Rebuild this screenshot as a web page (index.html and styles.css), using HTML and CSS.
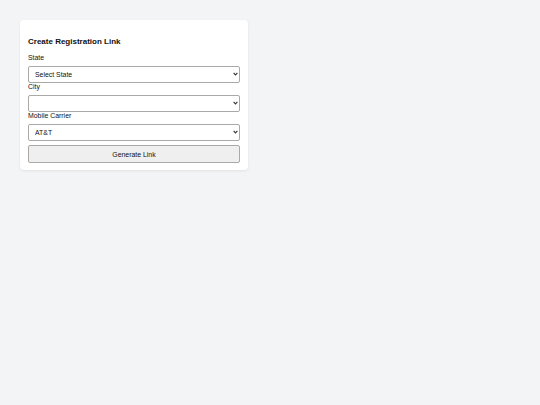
FILE: index.html
```html
<!DOCTYPE html>
<html lang="en">

<head>
  <meta charset="UTF-8">
  <title>Create Registration Link</title>
  <link rel="stylesheet" href="styles.css">
</head>

<body>
  <div class="card">
    <h3 class="card-title">Create Registration Link</h3>

    <label for="state">State</label>
    <div class="select-wrap">
      <select id="state">
        <option>Select State</option>
      </select>
      <svg class="chevron" width="5" height="4" viewBox="0 0 5 4"><path d="M0.6 0.8 L2.5 2.9 L4.4 0.8" fill="none" stroke="#333" stroke-width="1.1"/></svg>
    </div>

    <label for="city">City</label>
    <div class="select-wrap">
      <select id="city">
        <option></option>
      </select>
      <svg class="chevron" width="5" height="4" viewBox="0 0 5 4"><path d="M0.6 0.8 L2.5 2.9 L4.4 0.8" fill="none" stroke="#333" stroke-width="1.1"/></svg>
    </div>

    <label for="carrier">Mobile Carrier</label>
    <div class="select-wrap">
      <select id="carrier">
        <option>AT&amp;T</option>
        <option>Verizon</option>
        <option>T-Mobile</option>
      </select>
      <svg class="chevron" width="5" height="4" viewBox="0 0 5 4"><path d="M0.6 0.8 L2.5 2.9 L4.4 0.8" fill="none" stroke="#333" stroke-width="1.1"/></svg>
    </div>

    <button id="generate">Generate Link</button>
  </div>
</body>

</html>
```

FILE: styles.css
```css
:root {
  --bg-color: #f3f4f6;
  --border-color: #a9a9a9;
  --text-color: #111;
}

body {
  font-family: "Liberation Sans", Arial, sans-serif;
  font-size: 6.9px;
  margin: 0;
  padding: 20px;
  color: var(--text-color);
  background-color: var(--bg-color);
}

.card {
  width: 212px;
  padding: 8px 8px 7px;
  background-color: #fff;
  border-radius: 4px;
  box-shadow: 0 1px 3px rgba(0, 0, 0, 0.08);
  display: flex;
  flex-direction: column;
}

.card-title {
  font-size: 8px;
  line-height: 10px;
  font-weight: bold;
  margin: 9px 0 7px;
}

label {
  display: block;
  line-height: 7px;
  margin-bottom: 5px;
}

.select-wrap {
  position: relative;
}

select {
  display: block;
  width: 100%;
  height: 17px;
  box-sizing: border-box;
  appearance: none;
  font-family: inherit;
  font-size: 6.9px;
  padding: 0 6px;
  margin: 0;
  border: 1px solid var(--border-color);
  border-radius: 2px;
  background-color: #fff;
  color: var(--text-color);
}

.chevron {
  position: absolute;
  right: 2px;
  top: 6px;
  pointer-events: none;
}

button {
  margin-top: 4px;
  height: 18px;
  font-family: inherit;
  font-size: 6.9px;
  color: var(--text-color);
  background-color: #efefef;
  border: 1px solid var(--border-color);
  border-radius: 2px;
  cursor: pointer;
}
```
